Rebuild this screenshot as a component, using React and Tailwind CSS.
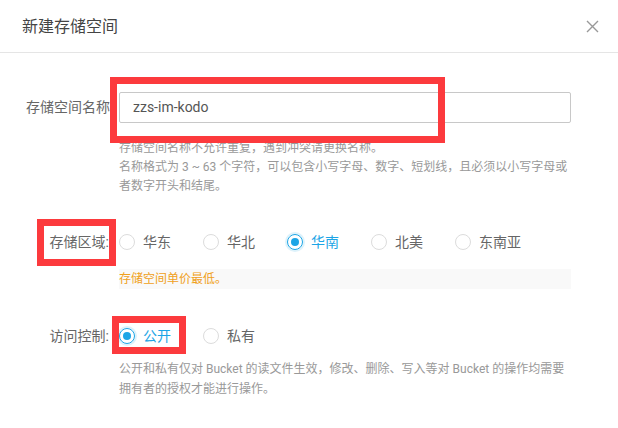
import React from "react";

const regions = ["华东", "华北", "华南", "北美", "东南亚"];
const access = ["公开", "私有"];

function Radio({ label, checked }) {
	return (
		<label className="flex items-center mr-[32px] h-[20px]">
			<span
				className={
					checked
						? "w-[16px] h-[16px] rounded-full border border-[#1ca5e6] flex items-center justify-center shadow-[0_0_0_2px_rgba(28,165,230,0.15)]"
						: "w-[16px] h-[16px] rounded-full border border-[#dcdcdc] bg-white"
				}
			>
				{checked && <span className="w-[8px] h-[8px] rounded-full bg-[#1ca5e6]" />}
			</span>
			<span
				className={
					"ml-[8px] text-[14px] " +
					(checked ? "text-[#1ca5e6]" : "text-[#666]")
				}
			>
				{label}
			</span>
		</label>
	);
}

function Label({ children }) {
	return (
		<div className="w-[110px] shrink-0 text-right text-[14px] text-[#666] pr-[1px]">
			{children}
		</div>
	);
}

export default function App() {
	return (
		<div
			className="relative w-[618px] h-[428px] bg-white overflow-hidden"
			style={{ fontFamily: 'Roboto, "Noto Sans CJK SC", sans-serif' }}
		>
			{/* header */}
			<div className="h-[53px] flex items-center justify-between pl-[22px] pr-[19px] border-b border-[#e5e5e5]">
				<span className="text-[16px] text-[#444] mt-[1px]">新建存储空间</span>
				<svg width="13" height="13" viewBox="0 0 13 13" className="text-[#999]">
					<path d="M1 1 L12 12 M12 1 L1 12" stroke="currentColor" strokeWidth="1.4" fill="none" />
				</svg>
			</div>

			<div className="pt-[39px]">
				{/* name */}
				<div className="flex">
					<div className="w-[110px] shrink-0 text-right text-[14px] text-[#666] leading-[31px] whitespace-nowrap overflow-hidden">
						存储空间名称
					</div>
					<div className="ml-[9px] w-[452px]">
						<div className="h-[31px] border border-[#c8c8c8] rounded-[2px] flex items-center pl-[13px] text-[14px] text-[#555]">
							zzs-im-kodo
						</div>
						<div className="mt-[16px] text-[12px] leading-[19px] text-[#999]">
							<div>存储空间名称不允许重复，遇到冲突请更换名称。</div>
							<div>名称格式为 3 ~ 63 个字符，可以包含小写字母、数字、短划线，且必须以小写字母或</div>
							<div>者数字开头和结尾。</div>
						</div>
					</div>
				</div>

				{/* region */}
				<div className="flex mt-[36px]">
					<Label>
						<span className="leading-[20px]">存储区域:</span>
					</Label>
					<div className="ml-[9px] w-[452px]">
						<div className="flex">
							{regions.map((r) => (
								<Radio key={r} label={r} checked={r === "华南"} />
							))}
						</div>
						<div className="mt-[17px] h-[20px] bg-[#f9f9f9] text-[12px] leading-[20px] text-[#f0a020]">
							存储空间单价最低。
						</div>
					</div>
				</div>

				{/* access */}
				<div className="flex mt-[37px]">
					<Label>
						<span className="leading-[20px]">访问控制:</span>
					</Label>
					<div className="ml-[9px] w-[460px]">
						<div className="flex">
							{access.map((r) => (
								<Radio key={r} label={r} checked={r === "公开"} />
							))}
						</div>
						<div className="mt-[13px] text-[12px] leading-[20px] text-[#999]">
							<div>公开和私有仅对 Bucket 的读文件生效，修改、删除、写入等对 Bucket 的操作均需要</div>
							<div>拥有者的授权才能进行操作。</div>
						</div>
					</div>
				</div>
			</div>

			{/* annotation boxes */}
			<div className="absolute left-[110px] top-[77px] w-[335px] h-[66px] border-[7px] border-[#fc3a3d]" />
			<div className="absolute left-[37px] top-[219px] w-[79px] h-[47px] border-[7px] border-[#fc3a3d]" />
			<div className="absolute left-[112px] top-[316px] w-[74px] h-[38px] border-[7px] border-[#fc3a3d]" />
		</div>
	);
}
